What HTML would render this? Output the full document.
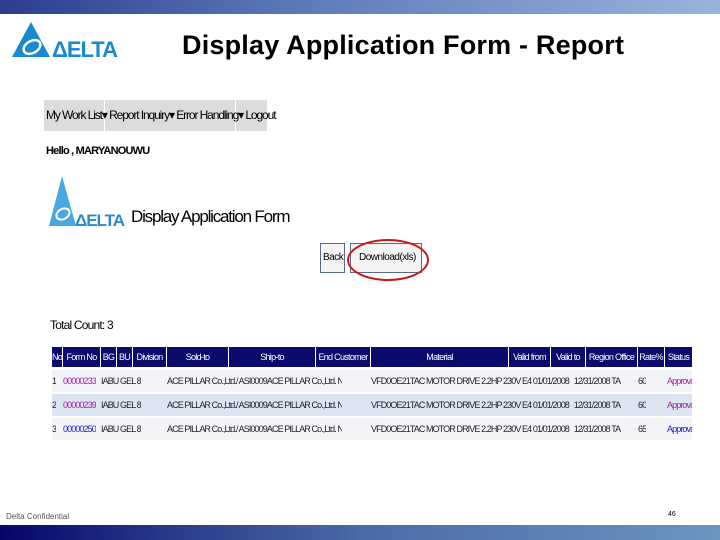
<!DOCTYPE html>
<html><head><meta charset="utf-8"><style>
*{margin:0;padding:0;box-sizing:border-box}
body{width:720px;height:540px;position:relative;background:#fff;font-family:"Liberation Sans",sans-serif;overflow:hidden}
.a{position:absolute;white-space:nowrap}
.n{font-size:11px;letter-spacing:-0.8px;transform-origin:left top}
.th{position:absolute;top:347px;height:20px;background:#0b0b6b;color:#fff;font-size:9px;letter-spacing:-0.7px;text-align:center;line-height:20px;overflow:hidden;white-space:nowrap}
.td{position:absolute;height:22px;font-size:9px;letter-spacing:-0.9px;line-height:22px;color:#222;overflow:hidden;white-space:nowrap}
</style></head><body>
<div class="a" style="left:0;top:0;width:720px;height:14px;background:linear-gradient(90deg,#2c3c90,#5a78b8 40%,#9ab4dc)"></div>
<div class="a" style="left:0;top:525px;width:720px;height:15px;background:linear-gradient(90deg,#06066a,#2a3c8c 25%,#4a6aa8 50%,#6a96c0)"></div>
<svg class="a" style="left:10px;top:20px" width="116" height="38" viewBox="0 0 116 38">
<polygon points="21,2 2,37 40,37" fill="#1a8ad0"/>
<ellipse cx="22" cy="27" rx="9" ry="6" fill="none" stroke="#fff" stroke-width="2.5" transform="rotate(-30 22 27)"/>
<text x="42" y="37" font-family="Liberation Sans" font-weight="bold" font-size="22" fill="#1a8ad0" letter-spacing="-1">ΔELTA</text>
</svg>
<div class="a" style="left:182px;top:30px;font-size:27px;font-weight:bold;color:#000;letter-spacing:0.2px">Display Application Form - Report</div>
<div class="a" style="left:44px;top:100px;width:223px;height:31px;background:#dcdcdc"></div>
<div class="a" style="left:104px;top:100px;width:1px;height:31px;background:#fff"></div>
<div class="a" style="left:235px;top:100px;width:1px;height:31px;background:#fff"></div>
<div class="a" style="left:46px;top:108px;font-size:12px;letter-spacing:-1.1px">My Work List▾ Report Inquiry▾ Error Handling▾ Logout</div>
<div class="a n" style="left:46px;top:145px;font-size:11px;font-weight:bold">Hello , MARYANOUWU</div>
<svg class="a" style="left:48px;top:174px" width="80" height="54" viewBox="0 0 80 54">
<polygon points="14,2 1,52 28,52" fill="#4aa8e0"/>
<ellipse cx="15" cy="40" rx="7" ry="5" fill="none" stroke="#fff" stroke-width="2" transform="rotate(-30 15 40)"/>
<text x="27" y="52" font-family="Liberation Sans" font-weight="bold" font-size="17" fill="#2a8ad0" letter-spacing="-1">ΔELTA</text>
</svg>
<div class="a" style="left:131px;top:207px;font-size:17px;letter-spacing:-1.2px;color:#000">Display Application Form</div>
<div class="a" style="left:320px;top:243px;width:25px;height:30px;border:1px solid #5a6a8a;background:#f4f4f4;font-size:10px;line-height:28px;padding-left:2px;letter-spacing:-0.5px">Back</div>
<div class="a" style="left:350px;top:243px;width:72px;height:30px;border:1px solid #5a6a8a;background:#f4f4f4;font-size:10px;line-height:28px;padding-left:8px;letter-spacing:-0.5px">Download(xls)</div>
<div class="a" style="left:347px;top:239px;width:82px;height:42px;border:2.5px solid #c81818;border-radius:50%"></div>
<div class="a n" style="left:50px;top:318px;font-size:12px">Total Count: 3</div>
<div class="th" style="left:52px;width:10px">No</div>
<div class="th" style="left:63px;width:37px">Form No</div>
<div class="th" style="left:101px;width:15px">BG</div>
<div class="th" style="left:117px;width:15px">BU</div>
<div class="th" style="left:133px;width:33px">Division</div>
<div class="th" style="left:167px;width:61px">Sold-to</div>
<div class="th" style="left:229px;width:86px">Ship-to</div>
<div class="th" style="left:316px;width:54px">End Customer</div>
<div class="th" style="left:371px;width:137px">Material</div>
<div class="th" style="left:509px;width:41px">Valid from</div>
<div class="th" style="left:551px;width:34px">Valid to</div>
<div class="th" style="left:586px;width:51px">Region Office</div>
<div class="th" style="left:638px;width:26px">Rate%</div>
<div class="th" style="left:665px;width:27px">Status</div>
<div class="a" style="left:52px;top:370px;width:640px;height:22px;background:#f2f4f8"></div>
<div class="a" style="left:52px;top:394px;width:640px;height:22px;background:#dde5f2"></div>
<div class="a" style="left:52px;top:418px;width:640px;height:22px;background:#f2f4f8"></div>
<div class="td" style="left:52px;top:370px">1</div><div class="td" style="left:52px;top:394px">2</div><div class="td" style="left:52px;top:418px">3</div>
<div class="td" style="left:63px;top:370px;color:#a020a0">00000233</div><div class="td" style="left:63px;top:394px;color:#a020a0">00000239</div><div class="td" style="left:63px;top:418px;color:#2020c0">00000250</div>
<div class="td" style="left:101px;top:370px">IABU GEL 8</div><div class="td" style="left:101px;top:394px">IABU GEL 8</div><div class="td" style="left:101px;top:418px">IABU GEL 8</div>
<div class="td" style="left:167px;top:370px;width:175px">ACE PILLAR Co.,Ltd./ ASI0009ACE PILLAR Co.,Ltd. N/A</div>
<div class="td" style="left:167px;top:394px;width:175px">ACE PILLAR Co.,Ltd./ ASI0009ACE PILLAR Co.,Ltd. N/A</div>
<div class="td" style="left:167px;top:418px;width:175px">ACE PILLAR Co.,Ltd./ ASI0009ACE PILLAR Co.,Ltd. N/A</div>
<div class="td" style="left:371px;top:370px;width:250px">VFD0OE21TAC MOTOR DRIVE 2.2HP 230V E4 01/01/2008 &nbsp; 12/31/2008 TAIWAN</div>
<div class="td" style="left:371px;top:394px;width:250px">VFD0OE21TAC MOTOR DRIVE 2.2HP 230V E4 01/01/2008 &nbsp; 12/31/2008 TAIWAN</div>
<div class="td" style="left:371px;top:418px;width:250px">VFD0OE21TAC MOTOR DRIVE 2.2HP 230V E4 01/01/2008 &nbsp; 12/31/2008 TAIWAN</div>
<div class="td" style="left:638px;top:370px">60</div><div class="td" style="left:638px;top:394px">60</div><div class="td" style="left:638px;top:418px">65</div>
<div class="td" style="left:667px;top:370px;color:#a020a0;width:25px">Approval</div><div class="td" style="left:667px;top:394px;color:#a020a0;width:25px">Approval</div><div class="td" style="left:667px;top:418px;color:#2020c0;width:25px">Approval</div>
<div class="a" style="left:6px;top:512px;font-size:8px;color:#555">Delta Confidential</div>
<div class="a" style="left:668px;top:511px;font-size:7px;color:#000">46</div>
</body></html>
